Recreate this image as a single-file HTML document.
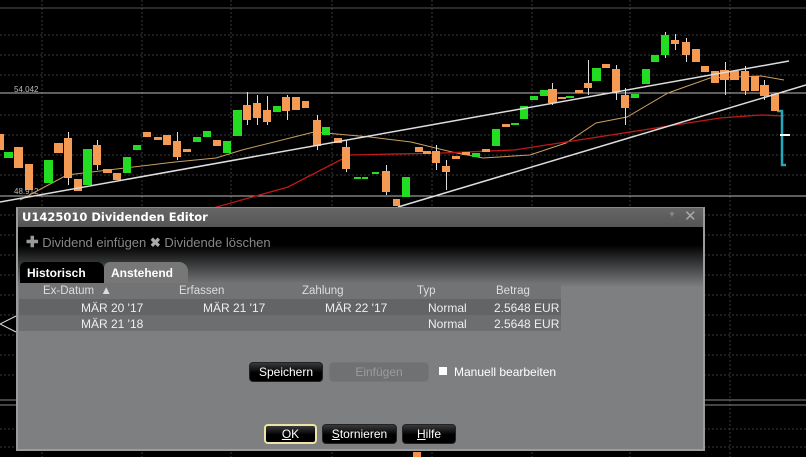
<!DOCTYPE html>
<html><head><meta charset="utf-8"><style>
*{margin:0;padding:0;box-sizing:border-box}
body{width:806px;height:457px;background:#000;position:relative;overflow:hidden;font-family:"Liberation Sans",sans-serif;font-size:12px}
.a{position:absolute}
.btn{position:absolute;border-radius:4px;background:linear-gradient(#3a3a3a,#000 55%);color:#fff;text-align:center;font-size:12px;line-height:19px;border:1px solid #222}
</style></head><body>
<svg class="a" style="left:0;top:0" width="806" height="457">
<g stroke="#3a3a3a" stroke-dasharray="2,2" stroke-width="1">
<line x1="0" y1="35" x2="806" y2="35"/><line x1="0" y1="55" x2="806" y2="55"/><line x1="0" y1="75" x2="806" y2="75"/><line x1="0" y1="115" x2="806" y2="115"/><line x1="0" y1="135" x2="806" y2="135"/><line x1="0" y1="155" x2="806" y2="155"/><line x1="0" y1="175" x2="806" y2="175"/>
<line x1="0" y1="215" x2="806" y2="215"/><line x1="0" y1="235" x2="806" y2="235"/><line x1="0" y1="255" x2="806" y2="255"/><line x1="0" y1="275" x2="806" y2="275"/><line x1="0" y1="295" x2="806" y2="295"/><line x1="0" y1="315" x2="806" y2="315"/><line x1="0" y1="335" x2="806" y2="335"/><line x1="0" y1="355" x2="806" y2="355"/><line x1="0" y1="375" x2="806" y2="375"/><line x1="0" y1="429" x2="806" y2="429"/><line x1="0" y1="447" x2="806" y2="447"/>
<line x1="42" y1="0" x2="42" y2="457"/><line x1="142" y1="0" x2="142" y2="457"/><line x1="231" y1="0" x2="231" y2="457"/><line x1="332" y1="0" x2="332" y2="457"/><line x1="432" y1="0" x2="432" y2="457"/><line x1="532" y1="0" x2="532" y2="457"/><line x1="630" y1="0" x2="630" y2="457"/><line x1="730" y1="0" x2="730" y2="457"/>
</g>
<line x1="0" y1="8" x2="806" y2="8" stroke="#555"/>
<line x1="0" y1="93" x2="806" y2="93" stroke="#bbb"/>
<line x1="0" y1="196" x2="806" y2="196" stroke="#bbb"/>
<line x1="0" y1="400" x2="806" y2="400" stroke="#888"/><line x1="0" y1="405" x2="806" y2="405" stroke="#888"/>
<text x="14" y="92" fill="#bbb" font-size="8" font-family="Liberation Sans">54.042</text>
<text x="14" y="194" fill="#bbb" font-size="8" font-family="Liberation Sans">48.912</text>
<polyline fill="none" stroke="#c8a060" stroke-width="1" points="20,200 67,175 175,162 216,158 242,150 314,132 370,137 411,142 452,152 483,158 530,155 566,143 596,123 627,117 668,93 710,78 761,76 784,80"/>
<polyline fill="none" stroke="#c01818" stroke-width="1.3" points="206,210 288,187 350,155 442,153 514,150 566,142 643,130 720,118 761,115 784,116"/>
<path d="M777 111H782V165H786" fill="none" stroke="#2ab" stroke-width="2.5"/>
<line x1="780" y1="135" x2="790" y2="135" stroke="#fff" stroke-width="2"/>
<rect x="413" y="452" width="8" height="5" fill="#f0904a"/>
</svg>
<svg class="a" style="left:0;top:0" width="806" height="210">
<g stroke="#ddd" stroke-width="1">
<line x1="68.5" y1="132" x2="68.5" y2="185"/><line x1="97.5" y1="140" x2="97.5" y2="170"/><line x1="177.5" y1="132" x2="177.5" y2="160"/><line x1="247.5" y1="92" x2="247.5" y2="125"/><line x1="257.5" y1="95" x2="257.5" y2="125"/><line x1="267.5" y1="96" x2="267.5" y2="125"/><line x1="287.5" y1="95" x2="287.5" y2="120"/><line x1="317.5" y1="115" x2="317.5" y2="150"/><line x1="346.5" y1="140" x2="346.5" y2="172"/><line x1="386.5" y1="165" x2="386.5" y2="195"/><line x1="436.5" y1="145" x2="436.5" y2="170"/><line x1="446.5" y1="160" x2="446.5" y2="190"/><line x1="552.5" y1="83" x2="552.5" y2="105"/><line x1="588.5" y1="60" x2="588.5" y2="95"/><line x1="616.5" y1="65" x2="616.5" y2="100"/><line x1="625.5" y1="88" x2="625.5" y2="125"/><line x1="665.5" y1="32" x2="665.5" y2="58"/><line x1="675.5" y1="34" x2="675.5" y2="50"/><line x1="686.5" y1="38" x2="686.5" y2="62"/><line x1="725.5" y1="62" x2="725.5" y2="95"/><line x1="745.5" y1="66" x2="745.5" y2="95"/><line x1="764.5" y1="80" x2="764.5" y2="100"/>
</g>
<g fill="#f59a52">
<rect x="0" y="134" width="4" height="16"/><rect x="14" y="147" width="9" height="21"/><rect x="25" y="164" width="8" height="26"/><rect x="54" y="143" width="9" height="10"/><rect x="64" y="138" width="8" height="40"/><rect x="74" y="179" width="8" height="12"/><rect x="93" y="145" width="8" height="20"/><rect x="103" y="169" width="9" height="4"/><rect x="113" y="173" width="8" height="7"/><rect x="143" y="132" width="8" height="5"/><rect x="154" y="137" width="8" height="3"/><rect x="163" y="135" width="8" height="10"/><rect x="173" y="141" width="8" height="16"/><rect x="183" y="149" width="8" height="3"/><rect x="213" y="140" width="8" height="6"/><rect x="243" y="105" width="8" height="15"/><rect x="253" y="103" width="8" height="15"/><rect x="263" y="110" width="8" height="12"/><rect x="282" y="97" width="8" height="14"/><rect x="292" y="97" width="8" height="13"/><rect x="302" y="101" width="7" height="7"/><rect x="313" y="120" width="8" height="26"/><rect x="334" y="138" width="8" height="5"/><rect x="342" y="147" width="8" height="22"/><rect x="382" y="171" width="8" height="21"/><rect x="393" y="199" width="7" height="7"/><rect x="415" y="147" width="8" height="5"/><rect x="423" y="151" width="8" height="3"/><rect x="432" y="151" width="8" height="12"/><rect x="442" y="166" width="8" height="6"/><rect x="452" y="156" width="8" height="3"/><rect x="462" y="152" width="8" height="3"/><rect x="482" y="149" width="8" height="3"/><rect x="502" y="124" width="8" height="3"/><rect x="548" y="89" width="9" height="14"/><rect x="558" y="97" width="8" height="2"/><rect x="575" y="90" width="8" height="3"/><rect x="584" y="83" width="8" height="5"/><rect x="602" y="64" width="8" height="4"/><rect x="612" y="69" width="8" height="23"/><rect x="621" y="95" width="8" height="13"/><rect x="671" y="40" width="8" height="4"/><rect x="682" y="42" width="8" height="13"/><rect x="692" y="49" width="8" height="13"/><rect x="701" y="66" width="8" height="6"/><rect x="711" y="71" width="8" height="12"/><rect x="720" y="70" width="9" height="10"/><rect x="730" y="71" width="9" height="9"/><rect x="741" y="71" width="8" height="20"/><rect x="751" y="76" width="8" height="15"/><rect x="760" y="85" width="9" height="11"/><rect x="771" y="94" width="8" height="17"/>
</g>
<g fill="#22dd22">
<rect x="4" y="152" width="9" height="6"/><rect x="44" y="160" width="9" height="23"/><rect x="83" y="149" width="9" height="36"/><rect x="123" y="157" width="8" height="16"/><rect x="133" y="145" width="8" height="5"/><rect x="193" y="137" width="8" height="5"/><rect x="203" y="131" width="8" height="6"/><rect x="223" y="141" width="8" height="12"/><rect x="233" y="110" width="9" height="26"/><rect x="273" y="106" width="8" height="6"/><rect x="322" y="127" width="8" height="8"/><rect x="354" y="177" width="7" height="2"/><rect x="362" y="177" width="6" height="2"/><rect x="372" y="172" width="7" height="2"/><rect x="402" y="177" width="8" height="20"/><rect x="472" y="153" width="8" height="4"/><rect x="492" y="129" width="8" height="17"/><rect x="511" y="123" width="8" height="2"/><rect x="520" y="106" width="8" height="13"/><rect x="530" y="96" width="8" height="4"/><rect x="540" y="90" width="8" height="6"/><rect x="566" y="96" width="8" height="2"/><rect x="592" y="68" width="9" height="13"/><rect x="631" y="94" width="8" height="4"/><rect x="642" y="69" width="8" height="15"/><rect x="651" y="55" width="8" height="7"/><rect x="661" y="35" width="8" height="20"/>
</g>
<line x1="0" y1="202" x2="789" y2="61" stroke="#ddd" stroke-width="1.5"/>
<line x1="398" y1="207" x2="806" y2="85" stroke="#ddd" stroke-width="1.5"/>
<line x1="704" y1="226" x2="785" y2="218" stroke="#2c2" stroke-width="1.3"/>
</svg>
<svg class="a" style="left:0;top:300px" width="20" height="40"><polyline points="16,16 0,24 16,32" fill="none" stroke="#ddd"/></svg>
<div class="a" style="left:16px;top:207px;width:689px;height:244px;background:#7e7f81;border:2px solid #9a9b9d;border-top:1px solid #888">
 <div class="a" style="left:0;top:0;width:685px;height:19px;background:linear-gradient(#666,#555);color:#fff;font-weight:bold;line-height:19px;padding-left:4px;font-family:'DejaVu Sans',sans-serif;font-size:11.5px">U1425010 Dividenden Editor</div>
 <div class="a" style="left:650px;top:2px;color:#888;font-size:8px">▼</div>
 <div class="a" style="left:666px;top:0;color:#aaa;font-size:15px;line-height:18px">✕</div>
 <div class="a" style="left:0;top:19px;width:685px;height:60px;background:linear-gradient(#000 0,#000 30%,#7e7f81 100%)"></div>
 <div class="a" style="left:8px;top:25px;color:#888;font-size:13px"><b style="font-size:15px;color:#999">✚</b> Dividend einfügen <b style="color:#aaa">✖</b> Dividende löschen</div>
 <div class="a" style="left:2px;top:54px;width:84px;height:21px;background:#000;border-radius:5px 7px 0 0;color:#fff;font-weight:bold;padding:4px 0 0 7px">Historisch</div>
 <div class="a" style="left:86px;top:54px;width:84px;height:21px;background:#777;border-radius:6px 9px 0 0;color:#fff;font-weight:bold;padding:4px 0 0 7px">Anstehend</div>
 <div class="a" style="left:1px;top:75px;width:542px;height:16px;background:#727375;color:#ddd;font-size:11.5px;line-height:17px">
  <span class="a" style="left:24px">Ex-Datum &nbsp;▲</span><span class="a" style="left:160px">Erfassen</span><span class="a" style="left:283px">Zahlung</span><span class="a" style="left:398px">Typ</span><span class="a" style="left:477px">Betrag</span></div>
 <div class="a" style="left:1px;top:91px;width:542px;height:16px;background:#636466;color:#eee;line-height:18px">
  <span class="a" style="left:62px">MÄR 20 '17</span><span class="a" style="left:184px">MÄR 21 '17</span><span class="a" style="left:306px">MÄR 22 '17</span><span class="a" style="left:409px">Normal</span><span class="a" style="left:475px">2.5648 EUR</span></div>
 <div class="a" style="left:1px;top:107px;width:542px;height:16px;background:#6d6e70;color:#eee;line-height:18px">
  <span class="a" style="left:62px">MÄR 21 '18</span><span class="a" style="left:409px">Normal</span><span class="a" style="left:475px">2.5648 EUR</span></div>
 <div class="btn" style="left:231px;top:154px;width:74px;height:20px">Speichern</div>
 <div class="btn" style="left:311px;top:154px;width:100px;height:20px;background:#707173;border-color:#777;color:#9c9c9c">Einfügen</div>
 <div class="a" style="left:421px;top:159px;width:8px;height:8px;background:#fff"></div>
 <div class="a" style="left:436px;top:157px;color:#fff">Manuell bearbeiten</div>
 <div class="btn" style="left:246px;top:216px;width:53px;height:20px;border:2px solid #ece3a4;line-height:16px"><u>O</u>K</div>
 <div class="btn" style="left:304px;top:216px;width:75px;height:20px"><u>S</u>tornieren</div>
 <div class="btn" style="left:384px;top:216px;width:54px;height:20px"><u>H</u>ilfe</div>
</div>
</body></html>
